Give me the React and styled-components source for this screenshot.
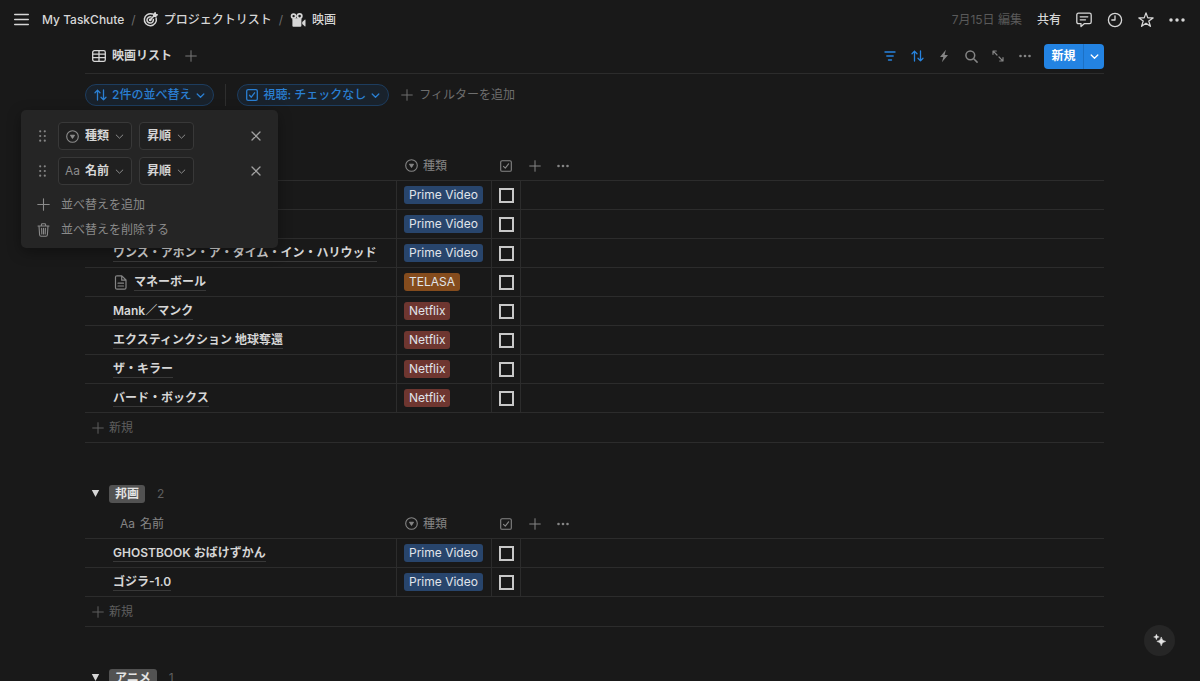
import { useState } from 'react';
import styled, { createGlobalStyle } from 'styled-components';

const GlobalStyle = createGlobalStyle`
  * {
    box-sizing: border-box;
  }

  body {
    margin: 0;
    background: #191919;
    color: #d6d6d6;
    font-family: Inter, 'Noto Sans CJK JP', sans-serif;
    font-size: 12px;
    line-height: 16px;
  }

  button,
  select {
    font: inherit;
    color: inherit;
    background: none;
    border: none;
    margin: 0;
    padding: 0;
    cursor: pointer;
  }

  a {
    color: inherit;
    text-decoration: none;
  }

  svg {
    display: block;
    flex: none;
  }
`;

const Page = styled.div`
  height: 100vh;
  display: flex;
  flex-direction: column;
  overflow: hidden;
`;

const TopBar = styled.header`
  display: flex;
  align-items: center;
  justify-content: space-between;
  height: 39px;
  flex: none;
  padding: 0 15px 0 14px;
`;

const Breadcrumb = styled.nav`
  display: flex;
  align-items: center;
  gap: 7px;

  > button {
    margin-right: 6px;
  }
`;

const Crumb = styled.a`
  display: flex;
  align-items: center;
  gap: 6px;
  font-weight: 500;
`;

const Slash = styled.span`
  color: #6c6c6c;
`;

const TopActions = styled.div`
  display: flex;
  align-items: center;
  gap: 15px;
`;

const Edited = styled.span`
  color: #5a5a5a;
`;

const ShareButton = styled.button`
  font-weight: 500;
`;

const Main = styled.main`
  flex: 1;
  min-height: 0;
  overflow-y: auto;
  scrollbar-width: none;
  padding: 0 96px 0 85px;
`;

const ViewBar = styled.div`
  display: flex;
  align-items: center;
  justify-content: space-between;
  height: 35px;
  border-bottom: 1px solid #2c2c2c;
`;

const Tabs = styled.div`
  display: flex;
  align-items: center;
  gap: 13px;
  padding-left: 7px;
  color: #7a7a7a;
`;

const Tab = styled.button`
  display: flex;
  align-items: center;
  gap: 6px;
  color: #d6d6d6;
  font-weight: 600;
`;

const Tools = styled.div`
  display: flex;
  align-items: center;
  gap: 7px;
`;

const ToolButton = styled.button`
  display: flex;
  align-items: center;
  justify-content: center;
  width: 20px;
  height: 20px;
  color: ${(props) => (props.$active ? '#2783de' : '#858585')};
`;

const NewButtons = styled.div`
  display: flex;
  height: 25px;
  margin-left: 2px;
  border-radius: 4px;
  background: #2383e2;
  color: #fff;
  overflow: hidden;

  button {
    display: flex;
    align-items: center;
    justify-content: center;
    font-weight: 600;
  }

  button:first-child {
    width: 39px;
  }

  button:last-child {
    width: 21px;
    border-left: 1px solid #1c70c4;
  }
`;

const FilterBar = styled.div`
  display: flex;
  align-items: center;
  height: 42px;
  margin-bottom: 4px;
`;

const SortAnchor = styled.div`
  position: relative;
`;

const Pill = styled.button`
  display: flex;
  align-items: center;
  gap: 5px;
  height: 22px;
  padding: 0 8px;
  border: 1px solid #1d3d5f;
  border-radius: 11px;
  background: #19222c;
  color: #2a7fd2;
  font-weight: 500;
`;

const FilterDivider = styled.span`
  width: 1px;
  height: 22px;
  margin: 0 11px;
  background: #2e2e2e;
`;

const AddFilter = styled.button`
  display: flex;
  align-items: center;
  gap: 6px;
  margin-left: 12px;
  color: #6e6e6e;
`;

const SortMenu = styled.div`
  position: absolute;
  z-index: 2;
  top: 26px;
  left: -64px;
  width: 257px;
  padding: 12px 0 6px;
  border-radius: 5px;
  background: #252525;
  box-shadow: 0 4px 14px rgba(0, 0, 0, 0.35);
`;

const SortRow = styled.div`
  display: flex;
  align-items: center;
  gap: 7px;
  height: 28px;
  margin-bottom: 7px;
  padding: 0 17px 0 18px;
`;

const Grip = styled.button`
  margin-right: 5px;
  color: #858585;
`;

const SelectBox = styled.label`
  display: flex;
  align-items: center;
  height: 28px;
  padding: 0 7px 0 ${(props) => (props.$withIcon ? '6px' : '7px')};
  border: 1px solid #383838;
  border-radius: 4px;
  background: #202020;
  color: #8c8c8c;

  select {
    appearance: none;
    color: #d6d6d6;
    font-weight: 600;
    padding-right: 5px;
    outline: none;
  }
`;

const FieldIcon = styled.span`
  display: flex;
  align-items: center;
  justify-content: center;
  width: 15px;
  margin-right: 5px;
`;

const RemoveButton = styled.button`
  margin-left: auto;
  color: #a0a0a0;
`;

const MenuItem = styled.button`
  display: flex;
  align-items: center;
  gap: 11px;
  width: 100%;
  height: 25px;
  padding: 0 16px;
  color: #8a8a8a;
`;

const Group = styled.section`
  margin-bottom: 35px;
`;

const GroupHeader = styled.div`
  display: flex;
  align-items: center;
  height: 31px;
  padding-left: 6px;
`;

const ToggleButton = styled.button`
  margin-right: 9px;
`;

const GroupName = styled.span`
  padding: 0 6px;
  height: 18px;
  line-height: 18px;
  border-radius: 3px;
  background: #525252;
  color: #e4e4e4;
  font-weight: 600;
`;

const Count = styled.span`
  margin-left: 12px;
  color: #5f5f5f;
`;

const Table = styled.table`
  width: 100%;
  table-layout: fixed;
  border-collapse: separate;
  border-spacing: 0;

  th,
  td {
    height: 29px;
    padding: 0 7px;
    text-align: left;
    border-bottom: 1px solid #2c2c2c;
    white-space: nowrap;
  }

  th {
    height: 30px;
    padding: 0 8px;
    color: #858585;
    font-weight: 400;
  }

  td:not(:last-child) {
    border-right: 1px solid #2c2c2c;
  }

  th:first-child {
    padding-left: 35px;
  }

  td:first-child {
    padding-left: 28px;
  }

  col:nth-child(1) {
    width: 312px;
  }

  col:nth-child(2) {
    width: 95px;
  }

  col:nth-child(3) {
    width: 29px;
  }
`;

const HeadLabel = styled.span`
  display: flex;
  align-items: center;
  gap: ${(props) => props.$gap || 5}px;
`;

const TitleCell = styled.div`
  display: flex;
  align-items: center;
  gap: 6px;
  color: #858585;
`;

const Title = styled.a`
  color: #d6d6d6;
  font-weight: 600;
  border-bottom: 1px solid #383838;
`;

const tagColors = {
  'Prime Video': '#28456c',
  TELASA: '#854c1d',
  Netflix: '#6e3630',
};

const Tag = styled.span`
  display: block;
  width: max-content;
  height: 18px;
  line-height: 18px;
  padding: 0 5px;
  border-radius: 3px;
  color: #e0e4ea;
  background: ${(props) => tagColors[props.$name]};
`;

const CheckBox = styled.input`
  appearance: none;
  display: block;
  width: 15px;
  height: 15px;
  margin: 0;
  border: 2px solid #c8c8c8;

  &:checked {
    background: #2383e2;
    border-color: #2383e2;
  }
`;

const NewRow = styled.button`
  display: flex;
  align-items: center;
  gap: 5px;
  width: 100%;
  height: 30px;
  padding: 0 7px;
  color: #5f5f5f;
  border-bottom: 1px solid #2c2c2c;
`;

const AiButton = styled.button`
  position: fixed;
  right: 25px;
  bottom: 25px;
  display: flex;
  align-items: center;
  justify-content: center;
  width: 31px;
  height: 31px;
  border-radius: 50%;
  background: #262626;
  color: #e6e6e6;
`;

const Icon = ({ w = 12, h, box = '0 0 12 12', sw = 1, children }) => (
  <svg
    width={w}
    height={h || w}
    viewBox={box}
    fill='none'
    stroke='currentColor'
    strokeWidth={sw}
    strokeLinecap='round'
    strokeLinejoin='round'
    aria-hidden='true'
  >
    {children}
  </svg>
);

const PlusIcon = ({ size = 12 }) => (
  <Icon w={size}>
    <path d='M6 .7v10.6M.7 6h10.6' />
  </Icon>
);

const ChevronIcon = ({ size = 9, sw = 1.3 }) => (
  <Icon w={size} box='0 0 9 9' sw={sw}>
    <path d='M1.2 3l3.3 3.2L7.8 3' />
  </Icon>
);

const DotsIcon = ({ size = 12 }) => (
  <svg width={size} height={size} viewBox='0 0 12 12' fill='currentColor' aria-hidden='true'>
    <circle cx='1.5' cy='6' r='1.3' />
    <circle cx='6' cy='6' r='1.3' />
    <circle cx='10.5' cy='6' r='1.3' />
  </svg>
);

const SelectIcon = () => (
  <Icon w={13} box='0 0 13 13' sw={1.1}>
    <circle cx='6.5' cy='6.5' r='5.8' />
    <path d='M4.6 5.2h3.8L6.5 8.2z' fill='currentColor' />
  </Icon>
);

const CheckIcon = ({ sw = 1.1 }) => (
  <Icon w={12} sw={sw}>
    <rect x='.7' y='.7' width='10.6' height='10.6' rx='1.4' />
    <path d='M3.5 6.3l1.8 1.9L8.6 3.8' />
  </Icon>
);

const SortIcon = () => (
  <Icon w={13} h={12} box='0 0 13 12' sw={1.3}>
    <path d='M3.5 11V1.2M1 3.7l2.5-2.6L6 3.7M9.5 1v9.8M7 8.3l2.5 2.6L12 8.3' />
  </Icon>
);

const TargetIcon = () => (
  <Icon w={15} box='0 0 16 16' sw={1.6}>
    <path d='M10 2.2A6.4 6.4 0 1 0 14 6.5' />
    <path d='M8.6 5.2A3.4 3.4 0 1 0 11 7.9' />
    <circle cx='7.7' cy='8.4' r='.7' fill='currentColor' />
    <path d='M7.9 8.2l3.7-3.9' />
    <path d='M11.4 4.6V2.4L13 .9l.4 1.7 1.7.4-1.5 1.6z' fill='currentColor' />
  </Icon>
);

const CameraIcon = () => (
  <svg width='16' height='16' viewBox='0 0 16 16' fill='currentColor' aria-hidden='true'>
    <path
      fillRule='evenodd'
      d='M3.600 1.200a2.900 2.900 0 1 0 0 5.800a2.900 2.900 0 1 0 0-5.800zM3.600 2.900a1.200 1.200 0 1 1 0 2.400a1.200 1.200 0 1 1 0-2.400zM9.600 1a3.100 3.100 0 1 0 0 6.200a3.100 3.100 0 1 0 0-6.200zM9.600 2.800a1.300 1.300 0 1 1 0 2.600a1.300 1.300 0 1 1 0-2.600z'
    />
    <rect x='2.4' y='6.2' width='9' height='8.6' rx='1' />
    <path d='M12.200 10l2.800-2.400q.5-.3.5.3v6.200q0 .6-.5.300L12.200 12z' />
  </svg>
);

const TrashIcon = () => (
  <Icon w={13} h={14} box='0 0 13 14' sw={1.1}>
    <path d='M1 3h11M4.4 2.8V1.7q0-.9.9-.9h2.4q.9 0 .9.9v1.1M2 3l.6 8.8q.1 1.4 1.4 1.4h5q1.3 0 1.4-1.4L11 3M4.6 5.2l.2 5.8M6.5 5.2V11M8.4 5.2L8.2 11' />
  </Icon>
);

const groups = [
  {
    id: 'foreign',
    rows: [
      { title: '', tag: 'Prime Video' },
      { title: '', tag: 'Prime Video' },
      { title: 'ワンス・アポン・ア・タイム・イン・ハリウッド', tag: 'Prime Video' },
      { title: 'マネーボール', tag: 'TELASA', page: true },
      { title: 'Mank／マンク', tag: 'Netflix' },
      { title: 'エクスティンクション 地球奪還', tag: 'Netflix' },
      { title: 'ザ・キラー', tag: 'Netflix' },
      { title: 'バード・ボックス', tag: 'Netflix' },
    ],
  },
  {
    id: 'japanese',
    name: '邦画',
    count: 2,
    rows: [
      { title: 'GHOSTBOOK おばけずかん', tag: 'Prime Video' },
      { title: 'ゴジラ-1.0', tag: 'Prime Video' },
    ],
  },
  { id: 'anime', name: 'アニメ', count: 1, rows: [] },
];

const SortField = ({ icon, value, label }) => (
  <SelectBox $withIcon={!!icon}>
    {icon && <FieldIcon>{icon}</FieldIcon>}
    <select aria-label={label} defaultValue={value}>
      <option>{value}</option>
    </select>
    <ChevronIcon sw={1} />
  </SelectBox>
);

const SortMenuRow = ({ icon, field }) => (
  <SortRow>
    <Grip type='button' aria-label='drag'>
      <svg width='7' height='12' viewBox='0 0 7 12' fill='currentColor'>
        {[1.3, 6, 10.7].map((y) => (
          <g key={y}>
            <circle cx='1.2' cy={y} r='1.1' />
            <circle cx='5.8' cy={y} r='1.1' />
          </g>
        ))}
      </svg>
    </Grip>
    <SortField icon={icon} value={field} label='field' />
    <SortField value='昇順' label='order' />
    <RemoveButton type='button' aria-label='remove'>
      <Icon w={10} box='0 0 10 10' sw={1.3}>
        <path d='M1 1l8 8M9 1L1 9' />
      </Icon>
    </RemoveButton>
  </SortRow>
);

const MovieRow = ({ row }) => {
  const [checked, setChecked] = useState(false);

  return (
    <tr>
      <td>
        {row.title && (
          <TitleCell>
            {row.page && (
              <Icon w={15} box='0 0 15 15' sw={1.2}>
                <path d='M4 .8h4.800L13 5v7.700q0 1.500-1.500 1.500H4q-1.500 0-1.500-1.500V2.300Q2.500.8 4 .8zM8.700 1v4.200H13M5 8.200h5.500M5 11h5.500' />
              </Icon>
            )}
            <Title href='#'>{row.title}</Title>
          </TitleCell>
        )}
      </td>
      <td>
        <Tag $name={row.tag}>{row.tag}</Tag>
      </td>
      <td>
        <CheckBox
          type='checkbox'
          aria-label='視聴'
          checked={checked}
          onChange={() => setChecked(!checked)}
        />
      </td>
      <td />
    </tr>
  );
};

const MovieGroup = ({ group }) => (
  <Group>
    <GroupHeader>
      <ToggleButton type='button' aria-label='toggle'>
        <svg width='9' height='9' viewBox='0 0 9 9' fill='currentColor'>
          <path d='M.8 1h7.4L4.5 8z' />
        </svg>
      </ToggleButton>
      {group.name && <GroupName>{group.name}</GroupName>}
      {group.count && <Count>{group.count}</Count>}
    </GroupHeader>
    {group.rows.length > 0 && (
      <>
        <Table>
          <colgroup>
            <col />
            <col />
            <col />
            <col />
          </colgroup>
          <thead>
            <tr>
              <th>
                <HeadLabel>
                  <span>Aa</span>名前
                </HeadLabel>
              </th>
              <th>
                <HeadLabel>
                  <SelectIcon />
                  種類
                </HeadLabel>
              </th>
              <th>
                <HeadLabel>
                  <CheckIcon />
                </HeadLabel>
              </th>
              <th>
                <HeadLabel $gap={16}>
                  <button type='button' aria-label='add'>
                    <PlusIcon />
                  </button>
                  <button type='button' aria-label='more'>
                    <DotsIcon />
                  </button>
                </HeadLabel>
              </th>
            </tr>
          </thead>
          <tbody>
            {group.rows.map((row, index) => (
              <MovieRow key={index} row={row} />
            ))}
          </tbody>
        </Table>
        <NewRow type='button'>
          <PlusIcon />
          新規
        </NewRow>
      </>
    )}
  </Group>
);

const App = () => (
  <Page>
    <GlobalStyle />
    <TopBar>
      <Breadcrumb>
        <button type='button' aria-label='menu'>
          <Icon w={15} box='0 0 15 15' sw={1.4}>
            <path d='M.7 2.500h13.600M.7 7.500h13.600M.7 12.500h13.600' />
          </Icon>
        </button>
        <Crumb href='#'>My TaskChute</Crumb>
        <Slash>/</Slash>
        <Crumb href='#'>
          <TargetIcon />
          プロジェクトリスト
        </Crumb>
        <Slash>/</Slash>
        <Crumb href='#'>
          <CameraIcon />
          映画
        </Crumb>
      </Breadcrumb>
      <TopActions>
        <Edited>7月15日 編集</Edited>
        <ShareButton type='button'>共有</ShareButton>
        <button type='button' aria-label='comments'>
          <Icon w={16} box='0 0 16 16' sw={1.3}>
            <path d='M2.500 1.200h11q1.700 0 1.700 1.700v7q0 1.700-1.700 1.700H8.500L5 14.600v-3H2.500Q.8 11.600.8 9.900v-7q0-1.700 1.700-1.700zM4.200 4.800h7.600M4.200 7.800h5.300' />
          </Icon>
        </button>
        <button type='button' aria-label='updates'>
          <Icon w={16} box='0 0 16 16' sw={1.3}>
            <circle cx='8' cy='8' r='6.6' />
            <path d='M8 3.800V8H4.800' />
          </Icon>
        </button>
        <button type='button' aria-label='favorite'>
          <Icon w={16} box='0 0 16 16' sw={1.3}>
            <path d='M8 .9l1.800 5h5.300l-4.300 3.200 1.600 5.200L8 11.200l-4.400 3.100 1.600-5.200L.9 5.900h5.300z' />
          </Icon>
        </button>
        <button type='button' aria-label='more'>
          <DotsIcon size={16} />
        </button>
      </TopActions>
    </TopBar>
    <Main>
      <ViewBar>
        <Tabs>
          <Tab type='button'>
            <Icon w={14} h={12} box='0 0 14 12' sw={1.3}>
              <rect x='.7' y='.7' width='12.6' height='10.6' rx='1.6' />
              <path d='M.7 4.200h12.600M.7 7.700h12.600M7 .7v10.600' />
            </Icon>
            映画リスト
          </Tab>
          <button type='button' aria-label='add view'>
            <PlusIcon />
          </button>
        </Tabs>
        <Tools>
          <ToolButton type='button' aria-label='filter' $active>
            <Icon w={12} sw={1.4}>
              <path d='M1 2h10M2.800 6h6.400M4.500 10h3' />
            </Icon>
          </ToolButton>
          <ToolButton type='button' aria-label='sort' $active>
            <SortIcon />
          </ToolButton>
          <ToolButton type='button' aria-label='automation'>
            <svg width='12' height='14' viewBox='0 0 12 14' fill='currentColor'>
              <path d='M7.900.8L2 7.900h3.300L3.900 13.200 10 6H6.600z' />
            </svg>
          </ToolButton>
          <ToolButton type='button' aria-label='search'>
            <Icon w={13} box='0 0 13 13' sw={1.5}>
              <circle cx='5.3' cy='5.3' r='4.4' />
              <path d='M8.700 8.700l3.400 3.400' />
            </Icon>
          </ToolButton>
          <ToolButton type='button' aria-label='expand'>
            <Icon w={12} sw={1.2}>
              <path d='M1 4.300V1h3.300M1.200 1.200l3.800 3.800M11 7.700V11H7.700M10.800 10.800L7 7' />
            </Icon>
          </ToolButton>
          <ToolButton type='button' aria-label='more'>
            <DotsIcon />
          </ToolButton>
          <NewButtons>
            <button type='button'>新規</button>
            <button type='button' aria-label='templates'>
              <ChevronIcon />
            </button>
          </NewButtons>
        </Tools>
      </ViewBar>
      <FilterBar>
        <SortAnchor>
          <Pill type='button'>
            <SortIcon />
            2件の並べ替え
            <ChevronIcon />
          </Pill>
          <SortMenu>
            <SortMenuRow icon={<SelectIcon />} field='種類' />
            <SortMenuRow icon='Aa' field='名前' />
            <MenuItem type='button'>
              <PlusIcon size={13} />
              並べ替えを追加
            </MenuItem>
            <MenuItem type='button'>
              <TrashIcon />
              並べ替えを削除する
            </MenuItem>
          </SortMenu>
        </SortAnchor>
        <FilterDivider />
        <Pill type='button'>
          <CheckIcon sw={1.3} />
          視聴: チェックなし
          <ChevronIcon />
        </Pill>
        <AddFilter type='button'>
          <PlusIcon />
          フィルターを追加
        </AddFilter>
      </FilterBar>
      {groups.map((group) => (
        <MovieGroup key={group.id} group={group} />
      ))}
    </Main>
    <AiButton type='button' aria-label='AI'>
      <svg width='15' height='15' viewBox='0 0 17 17' fill='currentColor'>
        <path d='M10.500 4.500Q11 9 15.500 9.500Q11 10 10.500 14.500Q10 10 5.500 9.500Q10 9 10.500 4.500z' stroke='currentColor' strokeWidth='.6' />
        <path d='M5 1.200Q5.300 4.200 8.300 4.500Q5.300 4.800 5 7.800Q4.700 4.800 1.700 4.500Q4.700 4.200 5 1.200z' stroke='currentColor' strokeWidth='.3' />
      </svg>
    </AiButton>
  </Page>
);

export default App;
